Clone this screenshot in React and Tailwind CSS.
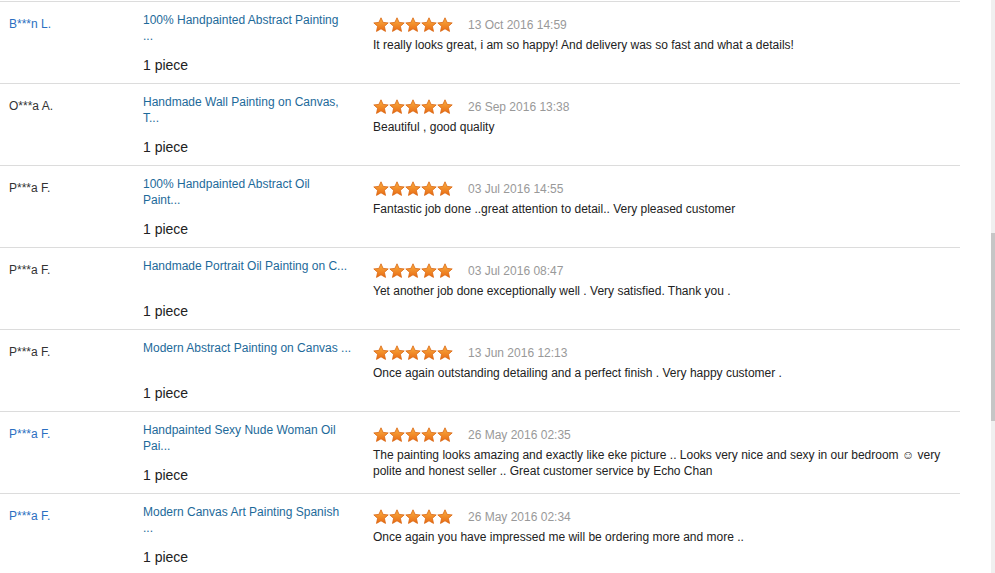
import React from "react";

const reviews = [
  {
    name: "B***n L.",
    link: true,
    title: ["100% Handpainted Abstract Painting", "..."],
    date: "13 Oct 2016 14:59",
    text: "It really looks great, i am so happy! And delivery was so fast and what a details!",
  },
  {
    name: "O***a A.",
    link: false,
    title: ["Handmade Wall Painting on Canvas,", "T..."],
    date: "26 Sep 2016 13:38",
    text: "Beautiful , good quality",
  },
  {
    name: "P***a F.",
    link: false,
    title: ["100% Handpainted Abstract Oil", "Paint..."],
    date: "03 Jul 2016 14:55",
    text: "Fantastic job done ..great attention to detail.. Very pleased customer",
  },
  {
    name: "P***a F.",
    link: false,
    title: ["Handmade Portrait Oil Painting on C..."],
    date: "03 Jul 2016 08:47",
    text: "Yet another job done exceptionally well . Very satisfied. Thank you .",
  },
  {
    name: "P***a F.",
    link: false,
    title: ["Modern Abstract Painting on Canvas ..."],
    date: "13 Jun 2016 12:13",
    text: "Once again outstanding detailing and a perfect finish . Very happy customer .",
  },
  {
    name: "P***a F.",
    link: true,
    title: ["Handpainted Sexy Nude Woman Oil", "Pai..."],
    date: "26 May 2016 02:35",
    text: "The painting looks amazing and exactly like eke picture .. Looks very nice and sexy in our bedroom \u263A very polite and honest seller .. Great customer service by Echo Chan",
  },
  {
    name: "P***a F.",
    link: true,
    title: ["Modern Canvas Art Painting Spanish", "..."],
    date: "26 May 2016 02:34",
    text: "Once again you have impressed me will be ordering more and more ..",
  },
];

function Star() {
  return (
    <svg width="16" height="16" viewBox="0 0 16 16">
      <defs>
        <linearGradient id="starFill" x1="0" y1="0" x2="0" y2="1">
          <stop offset="0" stopColor="#fbb042" />
          <stop offset="1" stopColor="#e86a12" />
        </linearGradient>
      </defs>
      <path
        d="M8 0.8 L10.1 5.4 L15.2 5.9 L11.4 9.3 L12.5 14.4 L8 11.8 L3.5 14.4 L4.6 9.3 L0.8 5.9 L5.9 5.4 Z"
        fill="url(#starFill)"
        stroke="#d9650f"
        strokeWidth="0.8"
        strokeLinejoin="round"
      />
    </svg>
  );
}

function ReviewRow({ r }) {
  return (
    <div className="flex h-[82px] border-t border-[#dcdcdc]">
      <div
        className={`w-[143px] pl-[9px] pt-[14px] text-[12px] leading-[16px] ${
          r.link ? "text-[#2b6fc1]" : "text-[#333]"
        }`}
      >
        {r.name}
      </div>
      <div className="w-[230px] pt-[10px]">
        <div className="h-[32px] text-[12px] leading-[16px] text-[#1d6a9a]">
          {r.title.map((t, i) => (
            <div key={i}>{t}</div>
          ))}
        </div>
        <div className="mt-[12px] text-[14px] leading-[18px] text-[#222]">1 piece</div>
      </div>
      <div className="w-[582px] pt-[14px]">
        <div className="flex items-center h-[18px]">
          <div className="flex">
            {[0, 1, 2, 3, 4].map((i) => (
              <Star key={i} />
            ))}
          </div>
          <span className="ml-[15px] text-[12px] text-[#999]">{r.date}</span>
        </div>
        <p className="mt-[3px] text-[12px] leading-[16px] text-[#222]">{r.text}</p>
      </div>
    </div>
  );
}

export default function App() {
  return (
    <div
      className="flex h-[573px] w-[995px] overflow-hidden bg-white"
      style={{ fontFamily: '"Liberation Sans", Arial, sans-serif' }}
    >
      <div className="w-[960px] pt-[1px]">
        {reviews.map((r, i) => (
          <ReviewRow key={i} r={r} />
        ))}
      </div>
      <div className="flex-1" />
      <div className="flex w-[4px] flex-col bg-[#f0f0f0]">
        <div className="h-[233px]" />
        <div className="h-[188px] bg-[#c6c6c6]" />
      </div>
    </div>
  );
}
